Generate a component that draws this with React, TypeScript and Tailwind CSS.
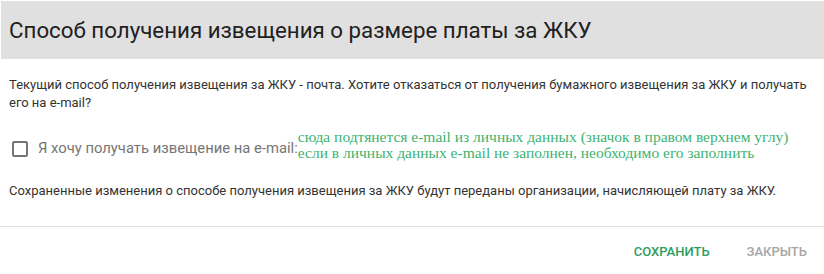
export default function App() {
  return (
    <div className="w-[824px] h-[274px] bg-white font-['Roboto',sans-serif] text-[#212121] overflow-hidden">
      <div className="pt-px pl-px">
        <div className="h-[58px] bg-[#e0e0e0] flex items-center pl-2">
          <h2 className="text-[22.3px] leading-6 font-normal text-[#212121]">
            Способ получения извещения о размере платы за ЖКУ
          </h2>
        </div>
      </div>
      <div className="px-[9px] pt-[17px]">
        <p className="text-[13px] leading-[18px] text-[#333333]">
          Текущий способ получения извещения за ЖКУ - почта. Хотите отказаться от получения бумажного извещения за ЖКУ и получать его на e-mail?
        </p>
        <div className="flex items-center mt-[17px] ml-[3px]">
          <span className="w-4 h-4 border-2 border-[#757575] rounded-[2px] shrink-0" />
          <span className="ml-[10px] text-[14.8px] text-[#757575]">Я хочу получать извещение на e-mail:</span>
          <span className="mb-[7px] font-['Liberation_Serif',serif] text-[15.5px] leading-4 text-[#3cb371]">
            <span className="block">сюда подтянется e-mail из личных данных (значок в правом верхнем углу)</span>
            <span className="block">если в личных данных e-mail не заполнен, необходимо его заполнить</span>
          </span>
        </div>
        <p className="mt-[14px] text-[13px] leading-[18px] text-[#333333]">
          Сохраненные изменения о способе получения извещения за ЖКУ будут переданы организации, начисляющей плату за ЖКУ.
        </p>
      </div>
      <div className="mt-[26px] border-t border-[#e0e0e0]" />
      <div className="flex justify-end items-center pr-[17px] pt-[15px] gap-[37px]">
        <button className="text-[13px] font-medium uppercase text-[#2e9d5e]">Сохранить</button>
        <button className="text-[13px] font-medium uppercase text-[#a6a6a6]">Закрыть</button>
      </div>
    </div>
  );
}
